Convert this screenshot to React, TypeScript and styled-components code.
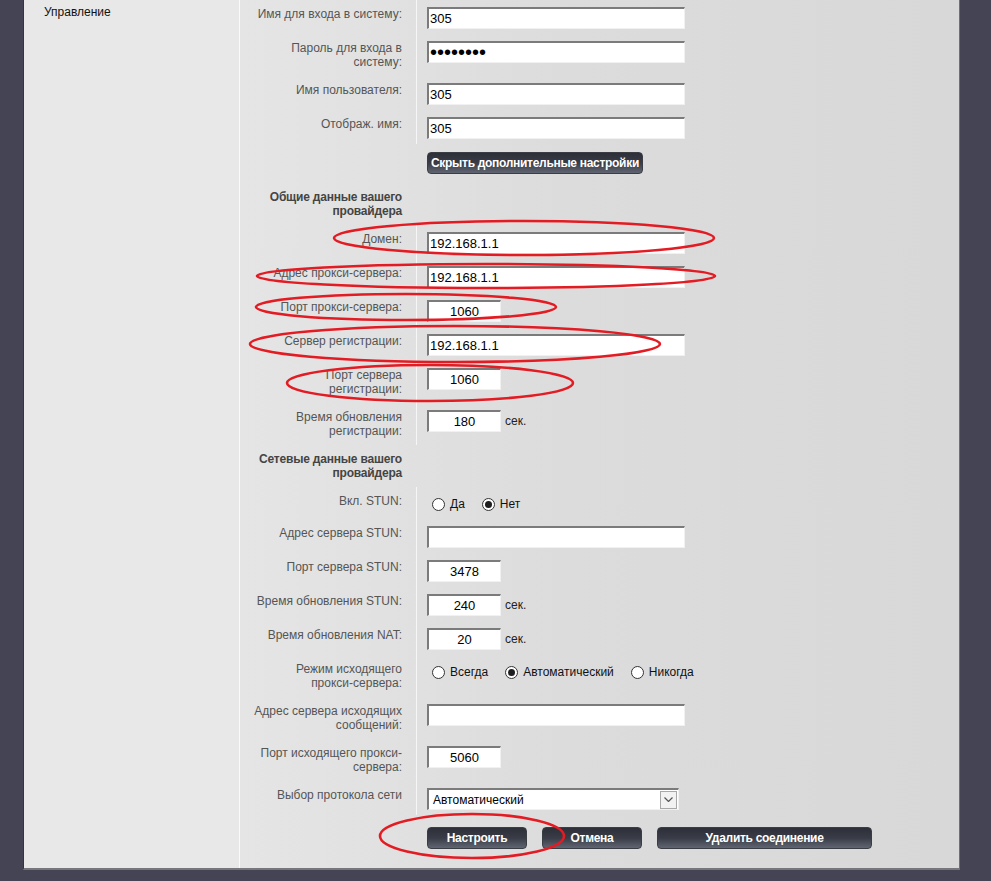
import React from "react";
import styled, { createGlobalStyle } from "styled-components";

const GlobalStyle = createGlobalStyle`
  html, body {
    margin: 0;
    padding: 0;
    background: #454455;
  }
  body {
    font-family: "Liberation Sans", Arial, sans-serif;
    font-size: 12px;
  }
`;

const Page = styled.div`
  position: relative;
  height: 881px;
  overflow: hidden;
  padding-left: 23px;
`;

const Panel = styled.div`
  display: grid;
  grid-template-columns: 216px 719px;
  width: 935px;
  border-left: 1px solid #35343f;
  border-right: 1px solid #707074;
  border-bottom: 2px solid #77777b;
`;

const Sidebar = styled.div`
  background: #e8e8e8;
  border-right: 1px solid #fafafa;
  padding: 5px 0 0 20px;
`;

const MenuItem = styled.div`
  color: #111;
  font-size: 12px;
  line-height: 14px;
`;

const Content = styled.div`
  background: linear-gradient(90deg, #e5e5e5 0%, #dcdcdc 45%, #d8d8d8 100%);
`;

const Form = styled.div`
  display: grid;
  grid-template-columns: 177px 1fr;
`;

const Label = styled.div<{ $plain?: boolean; $bold?: boolean }>`
  text-align: right;
  white-space: nowrap;
  padding: 7px 14px 7px 0;
  line-height: 14px;
  font-size: 12px;
  color: ${(p) => (p.$bold ? "#444" : "#555")};
  font-weight: ${(p) => (p.$bold ? "bold" : "normal")};
  letter-spacing: ${(p) => (p.$bold ? "-0.2px" : "0")};
  border-right: 1px solid ${(p) => (p.$plain ? "transparent" : "#f6f6f6")};
`;

const Field = styled.div`
  display: flex;
  align-items: flex-start;
  padding: 7px 0 5px 10px;
`;

const ButtonCell = styled.div<{ $pad: string }>`
  display: flex;
  gap: 15px;
  padding: ${(p) => p.$pad};
`;

const Inline = styled.div`
  display: flex;
  align-items: center;
  gap: 4px;
`;

const Suffix = styled.span`
  color: #222;
  font-size: 12px;
`;

const TextInput = styled.input<{ $short?: boolean }>`
  box-sizing: border-box;
  width: ${(p) => (p.$short ? "74px" : "258px")};
  height: 22px;
  margin: 0;
  padding: 0 1px;
  border-style: solid;
  border-width: 2px 1px 1px 2px;
  border-color: #7b7b7b #f1f1f1 #f1f1f1 #7b7b7b;
  background: #fff;
  font-family: "Liberation Sans", Arial, sans-serif;
  font-size: 13px;
  color: #000;
  text-align: ${(p) => (p.$short ? "center" : "left")};
  outline: none;
`;

const PasswordInput = styled(TextInput)`
  font-size: 20px;
`;

const SelectBox = styled.div`
  box-sizing: border-box;
  width: 252px;
  height: 22px;
  display: flex;
  align-items: center;
  border-style: solid;
  border-width: 2px 1px 1px 2px;
  border-color: #7b7b7b #f1f1f1 #f1f1f1 #7b7b7b;
  background: #fff;
`;

const SelectValue = styled.span`
  flex: 1;
  padding-left: 4px;
  color: #000;
  font-size: 12px;
`;

const SelectArrow = styled.span`
  box-sizing: border-box;
  width: 17px;
  height: 18px;
  margin-right: 1px;
  border: 1px solid #a8a8a8;
  background: #f2f2f2;
  display: flex;
  align-items: center;
  justify-content: center;
`;

const RadioGroup = styled.div`
  display: flex;
  align-items: center;
  height: 20px;
`;

const RadioItem = styled.label`
  display: flex;
  align-items: center;
  gap: 5px;
  margin: 0 12px 0 5px;
  color: #111;
  font-size: 12px;
`;

const RadioDot = styled.input.attrs({ type: "radio" })`
  appearance: none;
  box-sizing: border-box;
  margin: 0;
  width: 13px;
  height: 13px;
  border-radius: 50%;
  border: 1px solid #333;
  background: #fff;
  display: grid;
  place-content: center;

  &:checked::before {
    content: "";
    width: 7px;
    height: 7px;
    border-radius: 50%;
    background: #1e1e1e;
  }
`;

const DarkButton = styled.button<{ $width?: number }>`
  box-sizing: border-box;
  height: 22px;
  width: ${(p) => (p.$width ? `${p.$width}px` : "auto")};
  padding: 0 3px;
  border: 1px solid #3a3d44;
  border-radius: 4px;
  background: linear-gradient(#2d3039, #393c46 50%, #5f6571);
  color: #fff;
  font: bold 12px "Liberation Sans", Arial, sans-serif;
  letter-spacing: -0.3px;
  white-space: nowrap;
  cursor: pointer;
`;

const Marks = styled.svg`
  position: absolute;
  left: 0;
  top: 0;
  pointer-events: none;
`;

const marks = [
  { cx: 524, cy: 238, rx: 190, ry: 17 },
  { cx: 486, cy: 276, rx: 229, ry: 12 },
  { cx: 406, cy: 307, rx: 150, ry: 13 },
  { cx: 455, cy: 344, rx: 205, ry: 18 },
  { cx: 430, cy: 383, rx: 143, ry: 18 },
  { cx: 472, cy: 836, rx: 92, ry: 22 },
];

const App = () => (
  <>
    <GlobalStyle />
    <Page>
      <Panel>
        <Sidebar>
          <MenuItem>Управление</MenuItem>
        </Sidebar>
        <Content>
          <Form>
            <Label>Имя для входа в систему:</Label>
            <Field>
              <TextInput defaultValue="305" />
            </Field>

            <Label>
              Пароль для входа в<br />
              систему:
            </Label>
            <Field>
              <PasswordInput type="password" defaultValue="12345678" />
            </Field>

            <Label>Имя пользователя:</Label>
            <Field>
              <TextInput defaultValue="305" />
            </Field>

            <Label>Отображ. имя:</Label>
            <Field>
              <TextInput defaultValue="305" />
            </Field>

            <Label $plain />
            <ButtonCell $pad="8px 0 9px 10px">
              <DarkButton>Скрыть дополнительные настройки</DarkButton>
            </ButtonCell>

            <Label $plain $bold>
              Общие данные вашего<br />
              провайдера
            </Label>
            <Field />

            <Label>Домен:</Label>
            <Field>
              <TextInput defaultValue="192.168.1.1" />
            </Field>

            <Label>Адрес прокси-сервера:</Label>
            <Field>
              <TextInput defaultValue="192.168.1.1" />
            </Field>

            <Label>Порт прокси-сервера:</Label>
            <Field>
              <TextInput $short defaultValue="1060" />
            </Field>

            <Label>Сервер регистрации:</Label>
            <Field>
              <TextInput defaultValue="192.168.1.1" />
            </Field>

            <Label>
              Порт сервера<br />
              регистрации:
            </Label>
            <Field>
              <TextInput $short defaultValue="1060" />
            </Field>

            <Label>
              Время обновления<br />
              регистрации:
            </Label>
            <Field>
              <Inline>
                <TextInput $short defaultValue="180" />
                <Suffix>сек.</Suffix>
              </Inline>
            </Field>

            <Label $plain $bold>
              Сетевые данные вашего<br />
              провайдера
            </Label>
            <Field />

            <Label>Вкл. STUN:</Label>
            <Field>
              <RadioGroup>
                <RadioItem>
                  <RadioDot name="stun" />
                  Да
                </RadioItem>
                <RadioItem>
                  <RadioDot name="stun" defaultChecked />
                  Нет
                </RadioItem>
              </RadioGroup>
            </Field>

            <Label>Адрес сервера STUN:</Label>
            <Field>
              <TextInput defaultValue="" />
            </Field>

            <Label>Порт сервера STUN:</Label>
            <Field>
              <TextInput $short defaultValue="3478" />
            </Field>

            <Label>Время обновления STUN:</Label>
            <Field>
              <Inline>
                <TextInput $short defaultValue="240" />
                <Suffix>сек.</Suffix>
              </Inline>
            </Field>

            <Label>Время обновления NAT:</Label>
            <Field>
              <Inline>
                <TextInput $short defaultValue="20" />
                <Suffix>сек.</Suffix>
              </Inline>
            </Field>

            <Label>
              Режим исходящего<br />
              прокси-сервера:
            </Label>
            <Field>
              <RadioGroup>
                <RadioItem>
                  <RadioDot name="outbound" />
                  Всегда
                </RadioItem>
                <RadioItem>
                  <RadioDot name="outbound" defaultChecked />
                  Автоматический
                </RadioItem>
                <RadioItem>
                  <RadioDot name="outbound" />
                  Никогда
                </RadioItem>
              </RadioGroup>
            </Field>

            <Label>
              Адрес сервера исходящих<br />
              сообщений:
            </Label>
            <Field>
              <TextInput defaultValue="" />
            </Field>

            <Label>
              Порт исходящего прокси-<br />
              сервера:
            </Label>
            <Field>
              <TextInput $short defaultValue="5060" />
            </Field>

            <Label>Выбор протокола сети</Label>
            <Field>
              <SelectBox>
                <SelectValue>Автоматический</SelectValue>
                <SelectArrow>
                  <svg width="9" height="5" viewBox="0 0 9 5">
                    <path d="M0.5 0.5 L4.5 4.5 L8.5 0.5" fill="none" stroke="#555" strokeWidth="1.2" />
                  </svg>
                </SelectArrow>
              </SelectBox>
            </Field>

            <Label $plain />
            <ButtonCell $pad="12px 0 19px 10px">
              <DarkButton $width={100}>Настроить</DarkButton>
              <DarkButton $width={100}>Отмена</DarkButton>
              <DarkButton $width={215}>Удалить соединение</DarkButton>
            </ButtonCell>
          </Form>
        </Content>
      </Panel>
      <Marks width="991" height="881" viewBox="0 0 991 881">
        {marks.map((m, i) => (
          <ellipse key={i} cx={m.cx} cy={m.cy} rx={m.rx} ry={m.ry} fill="none" stroke="#e31b23" strokeWidth="2.6" />
        ))}
      </Marks>
    </Page>
  </>
);

export default App;
